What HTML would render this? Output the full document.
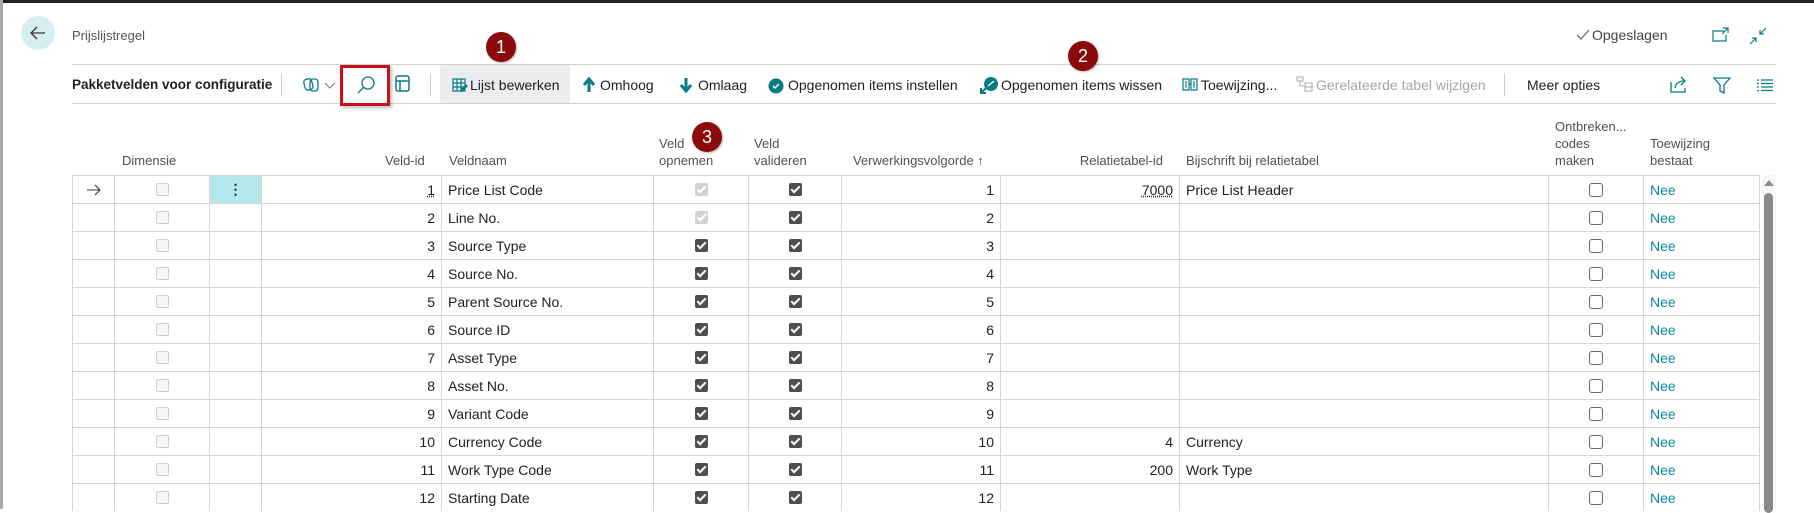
<!DOCTYPE html>
<html><head><meta charset="utf-8"><style>
*{box-sizing:border-box;margin:0;padding:0}
body{width:1814px;height:509px;overflow:hidden;background:#fff;font-family:"Liberation Sans",sans-serif;color:#212121;position:relative}
.a{position:absolute;white-space:nowrap}
.tb{font-size:14px;top:77px;line-height:16px}
.hd{font-size:13px;color:#505050;line-height:17px}
.grid{position:absolute;left:72px;top:175px;width:1688px}
.row{display:grid;grid-template-columns:43px 95px 52px 180px 212px 95px 93px 159px 179px 369px 95px 116px;height:28px;border-top:1px solid #d6d6d6;font-size:14px}
.row>div{border-right:1px solid #d6d6d6;display:flex;align-items:center;padding:0 6px;overflow:hidden;white-space:nowrap}
.row>div:first-child{border-left:1px solid #d6d6d6}
.c{justify-content:center}.r{justify-content:flex-end}
.cb{width:13px;height:13px;border-radius:2px;display:inline-block;position:relative}
.dis{border:1px solid #cfcfcf;background:#f6f6f6}
.lc{background:#d2d2d2}.dc{background:#4f4f4f}
.lc::after,.dc::after{content:"";position:absolute;left:4px;top:1px;width:3px;height:7px;border:solid #fff;border-width:0 2px 2px 0;transform:rotate(45deg)}
.un{border:1.5px solid #666;background:#fff;border-radius:3px;width:14px;height:14px}
.nee{color:#0a8a9e}
.badge{position:absolute;width:30px;height:30px;border-radius:50%;background:#8b0a0a;color:#fff;font-size:18px;text-align:center;line-height:30px;box-shadow:1px 1px 2px rgba(0,0,0,.3)}
</style></head><body>
<div class="a" style="left:0;top:0;width:1814px;height:3px;background:#222"></div>
<div class="a" style="left:0;top:0;width:3px;height:509px;background:#a9a9a9"></div>

<div class="a" style="left:21px;top:16px;width:34px;height:34px;border-radius:50%;background:#d7eef1"></div>
<svg class="a" style="left:29px;top:24px" width="18" height="18" viewBox="0 0 18 18"><path d="M16 9H2M8 3L2 9l6 6" stroke="#333" stroke-width="1.3" fill="none"/></svg>
<div class="a" style="left:72px;top:28px;font-size:13px;color:#555">Prijslijstregel</div>

<svg class="a" style="left:1576px;top:29px" width="14" height="12"><path d="M1 6l4 4 8-9" stroke="#666" stroke-width="1.2" fill="none"/></svg>
<div class="a" style="left:1592px;top:27px;font-size:14px;color:#444">Opgeslagen</div>
<svg class="a" style="left:1712px;top:27px" width="18" height="16"><path d="M12 4H1v10h13V8M11 1h5v5M16 1l-6 6" stroke="#0a7a86" stroke-width="1.2" fill="none"/></svg>
<svg class="a" style="left:1749px;top:27px" width="18" height="18"><path d="M17 1l-6 6M11 3v4h4M1 17l6-6M3 11h4v4" stroke="#0a7a86" stroke-width="1.2" fill="none"/></svg>

<div class="a" style="left:72px;top:64px;width:1704px;height:1px;background:#d0d0d0"></div>
<div class="a" style="left:72px;top:103px;width:1704px;height:1px;background:#d0d0d0"></div>

<div class="a" style="left:440px;top:65px;width:130px;height:38px;background:#ebecee;border-radius:2px"></div>
<div class="a tb" style="left:72px;font-weight:bold;font-size:13.5px">Pakketvelden voor configuratie</div>
<div class="a" style="left:281px;top:73px;width:1px;height:23px;background:#ccc"></div>
<svg class="a" style="left:303px;top:77px" width="34" height="16"><rect x="1.5" y="2" width="8" height="11" rx="3" stroke="#0a7a86" fill="none" stroke-width="1.3" transform="rotate(-15 5 8)"/><rect x="7" y="2" width="8" height="12" rx="3" stroke="#0a7a86" fill="none" stroke-width="1.3"/><path d="M22 6l5 5 5-5" stroke="#777" fill="none"/></svg>
<div class="a" style="left:340px;top:65px;width:50px;height:41px;border:3px solid #c8101a;box-shadow:2px 2px 3px rgba(0,0,0,.25)"></div>
<svg class="a" style="left:356px;top:75px" width="20" height="20"><circle cx="12" cy="8" r="6" stroke="#0a7a86" stroke-width="1.3" fill="none"/><path d="M8 12l-6 6" stroke="#0a7a86" stroke-width="1.3"/></svg>
<svg class="a" style="left:395px;top:75px" width="16" height="18"><rect x="1" y="1" width="13" height="15" rx="2" stroke="#0a7a86" stroke-width="1.5" fill="none"/><path d="M1 6h13M5 6v10" stroke="#0a7a86" stroke-width="1.5"/></svg>
<div class="a" style="left:430px;top:73px;width:1px;height:23px;background:#ccc"></div>

<svg class="a" style="left:452px;top:78px" width="16" height="14"><path d="M1 1h12v12H1zM1 5h12M1 9h12M5 1v12M9 1v12" stroke="#0a7a86" stroke-width="1.2" fill="none"/><path d="M8 12l6-6 2 2-6 6z" fill="#0a7a86"/></svg>
<div class="a tb" style="left:470px">Lijst bewerken</div>
<svg class="a" style="left:582px;top:77px" width="14" height="16"><path d="M7 15V3M2 8l5-6 5 6" stroke="#0a7a86" stroke-width="3" fill="none"/></svg>
<div class="a tb" style="left:600px">Omhoog</div>
<svg class="a" style="left:679px;top:77px" width="14" height="16"><path d="M7 1v12M2 8l5 6 5-6" stroke="#0a7a86" stroke-width="3" fill="none"/></svg>
<div class="a tb" style="left:698px">Omlaag</div>
<svg class="a" style="left:768px;top:78px" width="16" height="16"><circle cx="8" cy="8" r="7.5" fill="#0a7a86"/><path d="M5 8l2 2 4-4" stroke="#fff" stroke-width="1.5" fill="none"/></svg>
<div class="a tb" style="left:788px">Opgenomen items instellen</div>
<svg class="a" style="left:979px;top:76px" width="20" height="19"><circle cx="12" cy="8" r="7" fill="#0a7a86"/><path d="M2 17l6-6M2 12v5h5" stroke="#0a7a86" stroke-width="2" fill="none"/><path d="M9 10l6-5" stroke="#fff" stroke-width="1.2"/></svg>
<div class="a tb" style="left:1001px">Opgenomen items wissen</div>
<svg class="a" style="left:1182px;top:78px" width="16" height="13"><path d="M1 1h6v11H1zM9 1h6v11H9zM4 3v7M12 3v7M7 6h2" stroke="#0a7a86" stroke-width="1.2" fill="none"/></svg>
<div class="a tb" style="left:1201px">Toewijzing...</div>
<svg class="a" style="left:1296px;top:76px" width="17" height="16"><path d="M1 1h6v4H1zM9 7h7v8H9zM9 11h7M4 5v5h5" stroke="#aaa" stroke-width="1" fill="none"/></svg>
<div class="a tb" style="left:1316px;color:#a6a6a6">Gerelateerde tabel wijzigen</div>
<div class="a" style="left:1504px;top:73px;width:1px;height:23px;background:#ccc"></div>
<div class="a tb" style="left:1527px">Meer opties</div>
<svg class="a" style="left:1670px;top:76px" width="18" height="17"><path d="M1 6v10h14v-4M5 12c1-5 4-7 9-7M11 1l4 4-4 4" stroke="#0a7a86" stroke-width="1.3" fill="none"/></svg>
<svg class="a" style="left:1713px;top:77px" width="18" height="17"><path d="M1 1h16l-6 7v8l-4-2V8z" stroke="#0a7a86" stroke-width="1.3" fill="none"/></svg>
<svg class="a" style="left:1757px;top:79px" width="16" height="13"><path d="M0 1h2M4 1h12M0 4.5h2M4 4.5h12M0 8h2M4 8h12M0 11.5h2M4 11.5h12" stroke="#0a7a86" stroke-width="1.2"/></svg>

<div class="badge" style="left:486px;top:32px">1</div>
<div class="badge" style="left:1068px;top:41px">2</div>
<div class="badge" style="left:692px;top:122px">3</div>

<div class="a hd" style="left:122px;top:152px">Dimensie</div>
<div class="a hd" style="left:385px;top:152px">Veld-id</div>
<div class="a hd" style="left:449px;top:152px">Veldnaam</div>
<div class="a hd" style="left:659px;top:135px">Veld<br>opnemen</div>
<div class="a hd" style="left:754px;top:135px">Veld<br>valideren</div>
<div class="a hd" style="left:853px;top:152px">Verwerkingsvolgorde ↑</div>
<div class="a hd" style="left:1066px;top:152px;width:97px;text-align:right">Relatietabel-id</div>
<div class="a hd" style="left:1186px;top:152px">Bijschrift bij relatietabel</div>
<div class="a hd" style="left:1555px;top:118px">Ontbreken...<br>codes<br>maken</div>
<div class="a hd" style="left:1650px;top:135px">Toewijzing<br>bestaat</div>

<div class="grid">
<div class="row"><div class="c"><svg width="16" height="12"><path d="M1 6h13M9 1l5 5-5 5" stroke="#333" stroke-width="1.1" fill="none"/></svg></div><div class="c"><span class="cb dis"></span></div><div class="c" style="background:#b3e8ec;font-weight:bold">⋮</div><div class="r"><u style="text-decoration-style:dotted">1</u></div><div>Price List Code</div><div class="c"><span class="cb lc"></span></div><div class="c"><span class="cb dc"></span></div><div class="r">1</div><div class="r"><u style="text-decoration-style:dotted">7000</u></div><div>Price List Header</div><div class="c"><span class="cb un"></span></div><div class="nee">Nee</div></div>
<div class="row"><div></div><div class="c"><span class="cb dis"></span></div><div></div><div class="r">2</div><div>Line No.</div><div class="c"><span class="cb lc"></span></div><div class="c"><span class="cb dc"></span></div><div class="r">2</div><div></div><div></div><div class="c"><span class="cb un"></span></div><div class="nee">Nee</div></div>
<div class="row"><div></div><div class="c"><span class="cb dis"></span></div><div></div><div class="r">3</div><div>Source Type</div><div class="c"><span class="cb dc"></span></div><div class="c"><span class="cb dc"></span></div><div class="r">3</div><div></div><div></div><div class="c"><span class="cb un"></span></div><div class="nee">Nee</div></div>
<div class="row"><div></div><div class="c"><span class="cb dis"></span></div><div></div><div class="r">4</div><div>Source No.</div><div class="c"><span class="cb dc"></span></div><div class="c"><span class="cb dc"></span></div><div class="r">4</div><div></div><div></div><div class="c"><span class="cb un"></span></div><div class="nee">Nee</div></div>
<div class="row"><div></div><div class="c"><span class="cb dis"></span></div><div></div><div class="r">5</div><div>Parent Source No.</div><div class="c"><span class="cb dc"></span></div><div class="c"><span class="cb dc"></span></div><div class="r">5</div><div></div><div></div><div class="c"><span class="cb un"></span></div><div class="nee">Nee</div></div>
<div class="row"><div></div><div class="c"><span class="cb dis"></span></div><div></div><div class="r">6</div><div>Source ID</div><div class="c"><span class="cb dc"></span></div><div class="c"><span class="cb dc"></span></div><div class="r">6</div><div></div><div></div><div class="c"><span class="cb un"></span></div><div class="nee">Nee</div></div>
<div class="row"><div></div><div class="c"><span class="cb dis"></span></div><div></div><div class="r">7</div><div>Asset Type</div><div class="c"><span class="cb dc"></span></div><div class="c"><span class="cb dc"></span></div><div class="r">7</div><div></div><div></div><div class="c"><span class="cb un"></span></div><div class="nee">Nee</div></div>
<div class="row"><div></div><div class="c"><span class="cb dis"></span></div><div></div><div class="r">8</div><div>Asset No.</div><div class="c"><span class="cb dc"></span></div><div class="c"><span class="cb dc"></span></div><div class="r">8</div><div></div><div></div><div class="c"><span class="cb un"></span></div><div class="nee">Nee</div></div>
<div class="row"><div></div><div class="c"><span class="cb dis"></span></div><div></div><div class="r">9</div><div>Variant Code</div><div class="c"><span class="cb dc"></span></div><div class="c"><span class="cb dc"></span></div><div class="r">9</div><div></div><div></div><div class="c"><span class="cb un"></span></div><div class="nee">Nee</div></div>
<div class="row"><div></div><div class="c"><span class="cb dis"></span></div><div></div><div class="r">10</div><div>Currency Code</div><div class="c"><span class="cb dc"></span></div><div class="c"><span class="cb dc"></span></div><div class="r">10</div><div class="r">4</div><div>Currency</div><div class="c"><span class="cb un"></span></div><div class="nee">Nee</div></div>
<div class="row"><div></div><div class="c"><span class="cb dis"></span></div><div></div><div class="r">11</div><div>Work Type Code</div><div class="c"><span class="cb dc"></span></div><div class="c"><span class="cb dc"></span></div><div class="r">11</div><div class="r">200</div><div>Work Type</div><div class="c"><span class="cb un"></span></div><div class="nee">Nee</div></div>
<div class="row"><div></div><div class="c"><span class="cb dis"></span></div><div></div><div class="r">12</div><div>Starting Date</div><div class="c"><span class="cb dc"></span></div><div class="c"><span class="cb dc"></span></div><div class="r">12</div><div></div><div></div><div class="c"><span class="cb un"></span></div><div class="nee">Nee</div></div>
</div>

<div class="a" style="left:1762px;top:175px;width:14px;height:334px;background:#f7f7f7"></div>
<svg class="a" style="left:1763px;top:179px" width="12" height="8"><path d="M1 7l5-6 5 6z" fill="#8a8a8a"/></svg>
<div class="a" style="left:1764px;top:193px;width:9px;height:320px;background:#8a8a8a;border-radius:5px"></div>
</body></html>
